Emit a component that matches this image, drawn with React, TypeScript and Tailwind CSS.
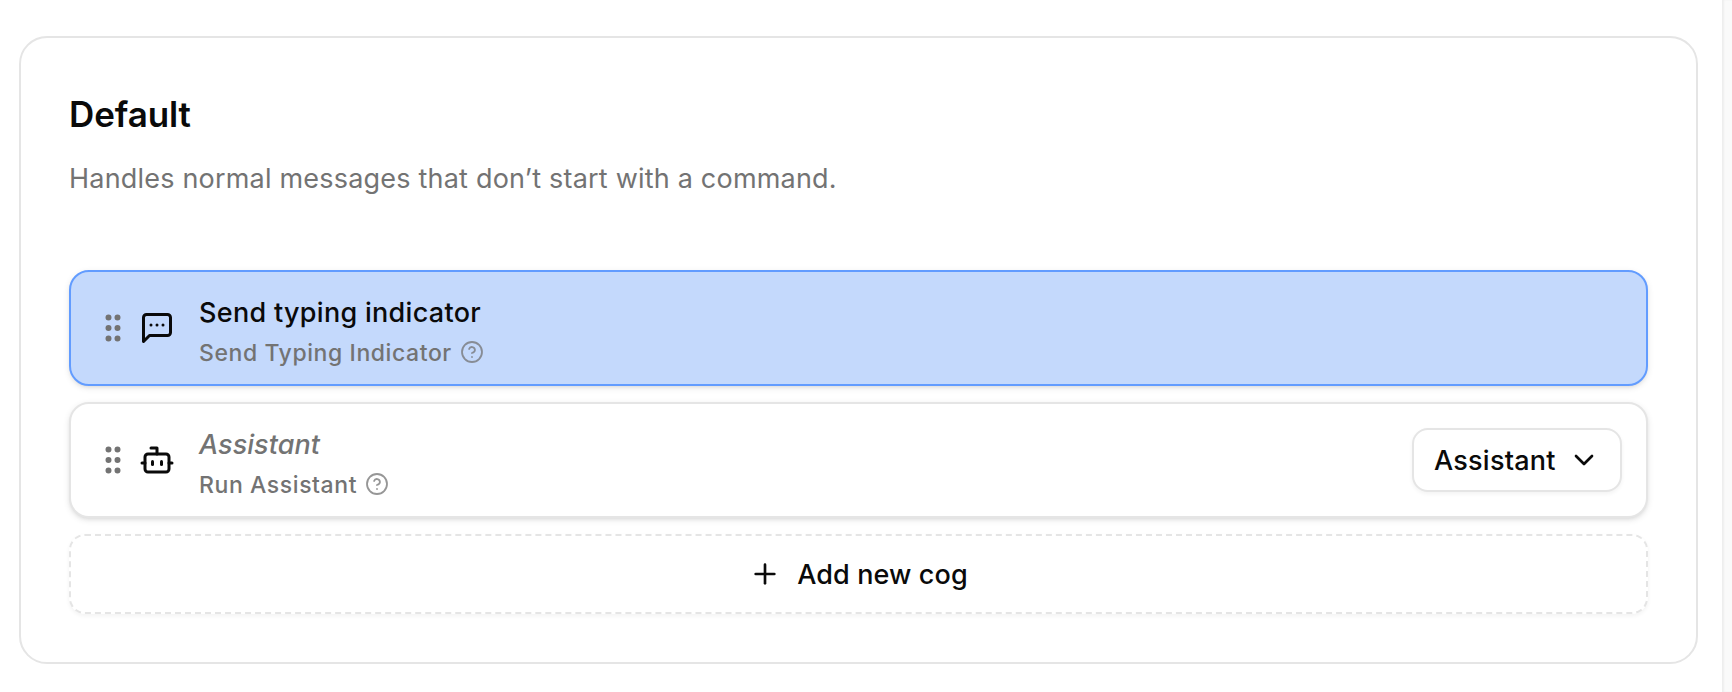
import type { ReactNode } from "react";
import { ChevronDown, GripVertical, Plus } from "lucide-react";
import clsx from "clsx";

interface IconProps {
  className?: string;
}

const Icon = ({ className, children }: IconProps & { children: ReactNode }) => (
  <svg
    viewBox="0 0 24 24"
    fill="none"
    stroke="currentColor"
    strokeWidth={2}
    strokeLinecap="round"
    strokeLinejoin="round"
    aria-hidden="true"
    className={className}
  >
    {children}
  </svg>
);

const MessageIcon = ({ className }: IconProps) => (
  <Icon className={className}>
    <path d="M21 15a2 2 0 0 1-2 2H7l-4 4V5a2 2 0 0 1 2-2h14a2 2 0 0 1 2 2z" />
    <path d="M8 10h.01" />
    <path d="M12 10h.01" />
    <path d="M16 10h.01" />
  </Icon>
);

const BotIcon = ({ className }: IconProps) => (
  <Icon className={className}>
    <path d="M12 8V4H8" />
    <rect width="16" height="12" x="4" y="8" rx="2" />
    <path d="M2 14h2" />
    <path d="M20 14h2" />
    <path d="M15 13v2" />
    <path d="M9 13v2" />
  </Icon>
);

const HelpIcon = () => (
  <svg
    viewBox="0 0 24 24"
    fill="none"
    stroke="currentColor"
    strokeWidth={1.8}
    strokeLinecap="round"
    strokeLinejoin="round"
    aria-hidden="true"
    className="mb-0.5 size-6 shrink-0 opacity-75"
  >
    <circle cx="12" cy="12" r="10" />
    <path d="M9.09 9a3 3 0 0 1 5.83 1c0 2-3 3-3 3" />
    <path d="M12 17h.01" />
  </svg>
);

interface CogRowProps {
  icon: ReactNode;
  title: string;
  type: string;
  selected?: boolean;
  unnamed?: boolean;
  children?: ReactNode;
}

const CogRow = ({ icon, title, type, selected, unnamed, children }: CogRowProps) => (
  <li
    className={clsx(
      "flex h-[116px] items-center rounded-[20px] border-2 px-6 shadow-[0_2px_6px_rgba(0,0,0,0.1),0_2px_4px_-2px_rgba(0,0,0,0.1)]",
      selected ? "border-[#629cff] bg-[#c4d9fc]" : "border-[#e5e5e5] bg-white",
    )}
  >
    <GripVertical className="size-9 shrink-0 text-[#737373]" />
    <div className="ml-2 shrink-0">{icon}</div>
    <div className="ml-6 grow pt-1.5">
      <div
        className={clsx(
          "text-[27px] leading-10 font-medium",
          unnamed ? "tracking-[0.05px] text-[#737373] italic" : "tracking-[0.3px]",
        )}
      >
        {title}
      </div>
      <div className="mt-1 flex items-center gap-2 text-[23px] leading-8 font-medium tracking-[0.58px] text-[#737373]">
        {type}
        <HelpIcon />
      </div>
    </div>
    {children}
  </li>
);

export default function App() {
  return (
    <div className="flex h-[692px] w-full bg-white font-['Inter',sans-serif] text-[#0a0a0a]">
      <main className="flex-1 py-9 pr-6 pl-[19px]">
        <section className="h-[628px] rounded-[28px] border-2 border-[#e5e5e5] px-12 pt-14">
          <h2 className="text-[35px] leading-10 font-semibold tracking-[-0.1px]">Default</h2>
          <p className="mt-[25px] text-[27px] leading-10 tracking-[0.2px] text-[#737373]">
            Handles normal messages that don’t start with a command.
          </p>

          <ul className="mt-[71px] flex flex-col gap-4">
            <CogRow
              icon={<MessageIcon className="size-9" />}
              title="Send typing indicator"
              type="Send Typing Indicator"
              selected
            />
            <CogRow icon={<BotIcon className="size-9" />} title="Assistant" type="Run Assistant" unnamed>
              <button className="flex h-16 w-[210px] items-center justify-between rounded-[16px] border-2 border-[#e5e5e5] bg-white px-5 text-[27px] font-medium tracking-[0.25px] shadow-[0_2px_4px_rgba(0,0,0,0.05)]">
                <span className="pt-0.5">Assistant</span>
                <ChevronDown className="size-8" />
              </button>
            </CogRow>
          </ul>

          <button className="mt-4 flex h-20 w-full items-center justify-center gap-4 rounded-[16px] border-2 border-dashed border-[#e5e5e5] bg-white text-[27px] font-medium tracking-[0.12px] shadow-[0_2px_4px_rgba(0,0,0,0.05)]">
            <Plus className="size-8" />
            <span className="pt-0.5">Add new cog</span>
          </button>
        </section>
      </main>
      <aside className="w-2.5 bg-[#fafafa] shadow-[inset_2px_0_2px_rgba(0,0,0,0.05)]" />
    </div>
  );
}
